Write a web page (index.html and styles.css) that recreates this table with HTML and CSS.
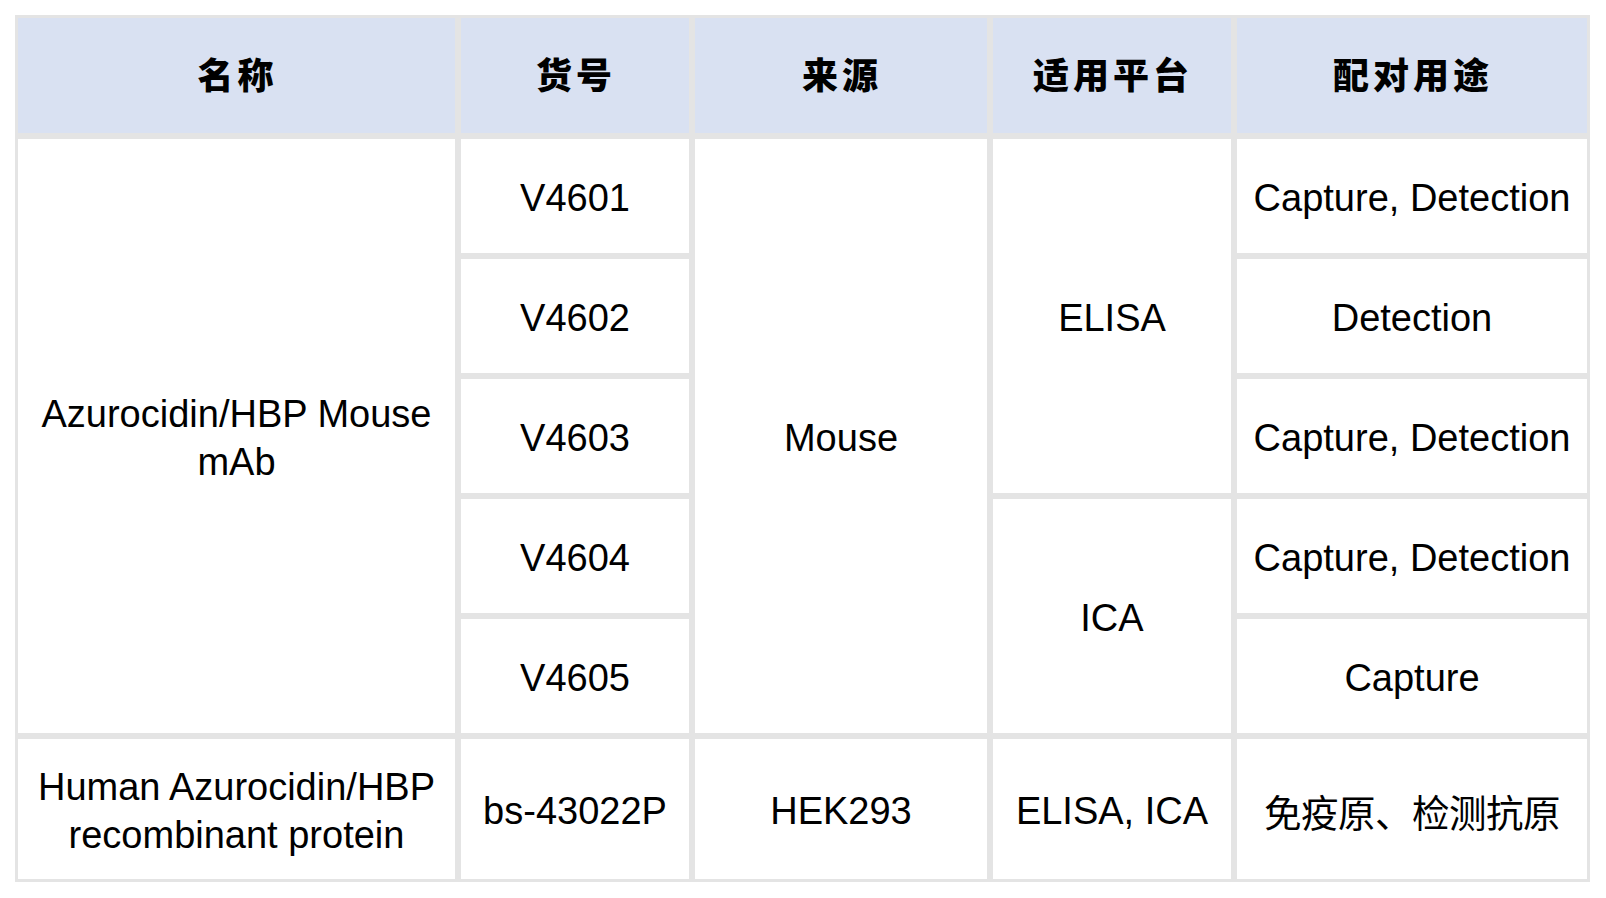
FILE: index.html
```html
<!DOCTYPE html>
<html lang="zh-CN">
<head>
<meta charset="utf-8">
<title>Azurocidin/HBP</title>
<link rel="stylesheet" href="styles.css">
</head>
<body>
<div class="table">
  <div class="cell head">名称</div>
  <div class="cell head">货号</div>
  <div class="cell head">来源</div>
  <div class="cell head">适用平台</div>
  <div class="cell head">配对用途</div>

  <div class="cell span5">Azurocidin/HBP Mouse mAb</div>
  <div class="cell">V4601</div>
  <div class="cell span5">Mouse</div>
  <div class="cell span3">ELISA</div>
  <div class="cell">Capture, Detection</div>

  <div class="cell">V4602</div>
  <div class="cell">Detection</div>

  <div class="cell">V4603</div>
  <div class="cell">Capture, Detection</div>

  <div class="cell">V4604</div>
  <div class="cell span2">ICA</div>
  <div class="cell">Capture, Detection</div>

  <div class="cell">V4605</div>
  <div class="cell">Capture</div>

  <div class="cell">Human Azurocidin/HBP recombinant protein</div>
  <div class="cell">bs-43022P</div>
  <div class="cell">HEK293</div>
  <div class="cell">ELISA, ICA</div>
  <div class="cell cjk">免疫原、检测抗原</div>
</div>
</body>
</html>
```

FILE: styles.css
```css
html, body {
  margin: 0;
  padding: 0;
  background: #ffffff;
}

.table {
  display: grid;
  grid-template-columns: 443px 234px 298px 244px 356px;
  grid-template-rows: 121px 120px 120px 120px 120px 120px 146px;
  margin: 15px 0 0 15px;
  width: 1575px;
  font-family: "Liberation Sans", Arial, "Noto Sans CJK SC", sans-serif;
  font-size: 38px;
  line-height: 48px;
  color: #000000;
}

.cell {
  box-sizing: border-box;
  border: 3px solid #e4e4e4;
  background: #ffffff;
  display: flex;
  align-items: center;
  justify-content: center;
  text-align: center;
  padding: 4px 10px 0;
}

.head {
  background: #d9e1f2;
  font-family: "Noto Sans CJK SC", sans-serif;
  font-weight: 900;
  font-size: 36px;
  letter-spacing: 4px;
  padding: 0 0 6px 2px;
}

.cjk {
  font-family: "Noto Sans CJK SC", sans-serif;
  font-size: 37.5px;
  letter-spacing: -0.5px;
}

.span5 { grid-row: span 5; }
.span3 { grid-row: span 3; }
.span2 { grid-row: span 2; }
```
